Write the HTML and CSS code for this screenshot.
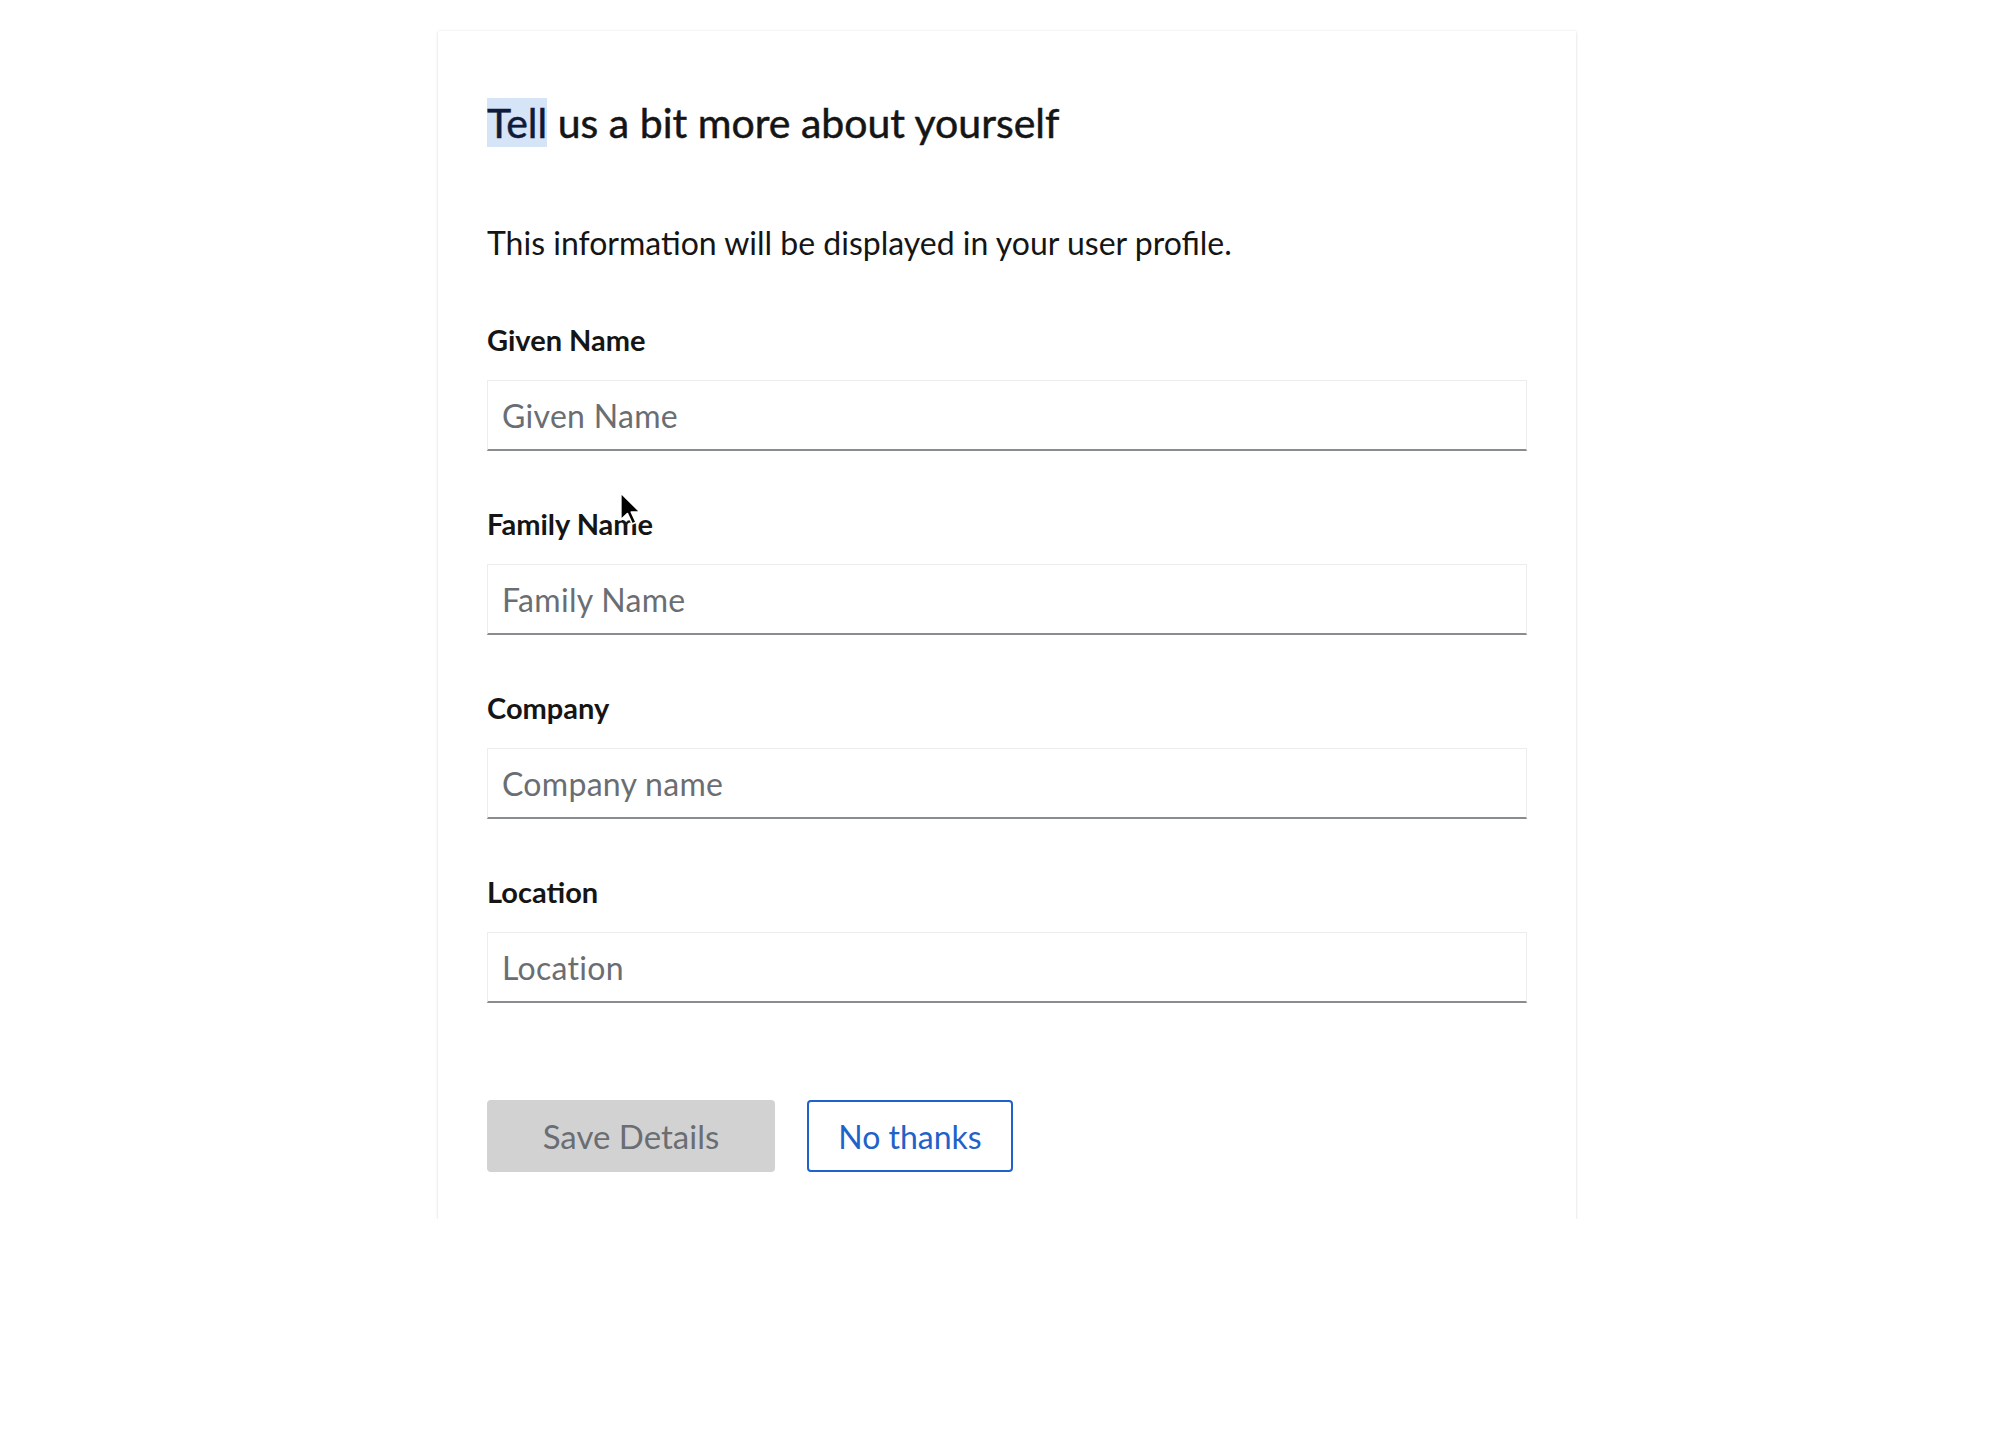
FILE: index.html
```html
<!DOCTYPE html>
<html lang="en">
  <head>
    <meta charset="UTF-8" />
    <meta name="viewport" content="width=device-width, initial-scale=1.0" />
    <title>Tell us a bit more about yourself</title>
    <link rel="stylesheet" href="styles.css">
  </head>
  <body>
    <main class="page">
      <section class="profile-card">
        <h1 class="profile-title"><span class="selected">Tell</span> us a bit more about yourself</h1>
        <p class="profile-intro">This information will be displayed in your user profile.</p>

        <form class="profile-form">
          <div class="form-group">
            <label class="form-label" for="given-name">Given Name</label>
            <input class="form-input" id="given-name" type="text" placeholder="Given Name" />
          </div>
          <div class="form-group">
            <label class="form-label" for="family-name">Family Name</label>
            <input class="form-input" id="family-name" type="text" placeholder="Family Name" />
          </div>
          <div class="form-group">
            <label class="form-label" for="company">Company</label>
            <input class="form-input" id="company" type="text" placeholder="Company name" />
          </div>
          <div class="form-group">
            <label class="form-label" for="location">Location</label>
            <input class="form-input" id="location" type="text" placeholder="Location" />
          </div>

          <div class="form-actions">
            <button type="button" class="btn btn-primary" disabled>Save Details</button>
            <button type="button" class="btn btn-secondary">No thanks</button>
          </div>
        </form>

        <!-- mouse pointer in the screenshot -->
        <svg class="pointer" width="24" height="36" viewBox="0 0 20 30">
          <path d="M1.5 1.5 L1.5 24 L7 18.8 L11 27.5 L14.2 26 L10.3 17.6 L17.5 17.4 Z" fill="#000" stroke="#fff" stroke-width="1.4" stroke-linejoin="round"/>
        </svg>
      </section>
    </main>
  </body>
</html>
```

FILE: styles.css
```css
body {
  margin: 0;
  background-color: #ffffff;
  font-family: Lato, "Open Sans", sans-serif;
  color: #151515;
}

.page {
  padding: 31px 0 0 438px;
}

.profile-card {
  position: relative;
  width: 1138px;
  box-sizing: border-box;
  padding: 68px 49px 47px 49px;
  background-color: #ffffff;
  box-shadow: 0 1px 3px rgba(3, 3, 3, 0.12), 0 0 2px rgba(3, 3, 3, 0.06);
}

.profile-title {
  margin: 0;
  font-size: 41px;
  font-weight: 400;
  line-height: 48px;
  color: #151515;
  -webkit-text-stroke: 0.5px currentColor; /* medium weight */
}

/* the word that is selected in the screenshot */
.selected {
  background-color: #d6e4f8;
  color: #0f1b3a;
}

.profile-intro {
  margin: 76px 0 0;
  font-size: 32px;
  line-height: 40px;
}

.profile-form {
  margin-top: 60px;
}

.form-group {
  display: flex;
  flex-direction: column;
  margin-bottom: 56px;
}

.form-label {
  font-size: 29px;
  font-weight: bold;
  line-height: 34px;
  margin-bottom: 23px;
}

.form-input {
  height: 71px;
  box-sizing: border-box;
  padding: 0 14px;
  border: 1px solid #ededed;
  border-bottom: 2px solid #8a8d90;
  border-radius: 0;
  font-family: inherit;
  font-size: 32px;
  letter-spacing: 0.3px;
  color: #151515;
  outline: none;
}

.form-input::placeholder {
  color: #6a6e73;
}

.form-actions {
  display: flex;
  gap: 32px;
  margin-top: 97px;
}

.btn {
  height: 72px;
  box-sizing: border-box;
  border-radius: 4px;
  font-family: inherit;
  font-size: 32px;
  cursor: pointer;
}

.btn-primary {
  width: 288px;
  padding: 0;
  border: none;
  background-color: #d2d2d2;
  color: #6a6e73;
  font-size: 33px;
}

.btn-secondary {
  width: 206px;
  padding: 0;
  border: 2px solid #1f62c9;
  background-color: #ffffff;
  color: #1f62c9;
}

.pointer {
  position: absolute;
  left: 181px;
  top: 460px;
}
```
